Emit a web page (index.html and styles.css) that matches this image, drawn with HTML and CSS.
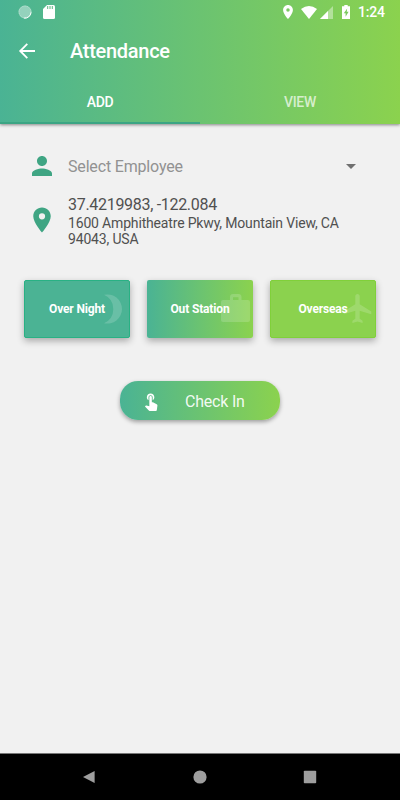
FILE: index.html
```html
<!DOCTYPE html>
<html lang="en">
<head>
<meta charset="utf-8">
<title>Attendance</title>
<link rel="stylesheet" href="styles.css">
</head>
<body>
<header class="header">
  <div class="status">
    <svg class="sync" viewBox="0 0 14 14"><circle cx="7" cy="7" r="6.500" fill="#fff" opacity=".4"/><circle cx="7" cy="7" r="6" fill="none" stroke="#fff" stroke-width="1" stroke-dasharray="1 1" opacity=".4"/><path d="M13 7.500a6.200 6.200 0 0 1-7 5.600" fill="none" stroke="#fff" stroke-width="1"/></svg>
    <svg class="card-icon" viewBox="0 0 12 14"><path fill="#fff" d="M4 0h6.500Q12 0 12 1.500v11Q12 14 10.500 14h-9Q0 14 0 12.500V4z"/><path d="M4.700 1v3M7 1v3M9.300 1v3" stroke="#5db981" stroke-width="1"/></svg>
    <span class="spacer"></span>
    <svg class="status-pin" viewBox="5 2 14 20"><path fill="#fff" d="M12 2C8.130 2 5 5.130 5 9c0 5.250 7 13 7 13s7-7.750 7-13c0-3.870-3.130-7-7-7zm0 9.500a2.500 2.500 0 1 1 0-5 2.500 2.500 0 0 1 0 5z"/></svg>
    <svg class="wifi" viewBox="0 0 16 13"><path fill="#fff" d="M0 3Q8-3 16 3L8 13z"/></svg>
    <svg class="signal" viewBox="0 0 13 13"><path fill="#fff" opacity=".4" d="M13 0v13H0z"/><path fill="#fff" d="M8 5v8H0z"/></svg>
    <svg class="battery" viewBox="0 0 8 14"><path fill="#fff" d="M2.300 0h3.400v1.300H8V14H0V1.300h2.300z"/><path fill="#7bc95f" d="M5.200 3.500 1.800 8.200h1.800v3.500l3-5H4.700z"/></svg>
    <span class="time">1:24</span>
  </div>
  <div class="toolbar">
    <svg class="back" viewBox="0 0 24 24"><path d="M20 12H5.500M12.300 4.800 5.200 12l7.100 7.200" fill="none" stroke="#fff" stroke-width="1.800"/></svg>
    <h1 class="title">Attendance</h1>
  </div>
  <nav class="tabs">
    <span class="tab active">ADD</span>
    <span class="tab">VIEW</span>
  </nav>
</header>
<main class="content">
  <div class="row employee">
    <svg class="row-icon" viewBox="0 0 24 24"><path d="M12 12c2.210 0 4-1.790 4-4s-1.790-4-4-4-4 1.790-4 4 1.790 4 4 4zm0 2c-2.670 0-8 1.340-8 4v2h16v-2c0-2.660-5.330-4-8-4z"/></svg>
    <span class="select">Select Employee</span>
    <svg class="caret" viewBox="0 0 10 5"><path d="M0 0h10L5 5z"/></svg>
  </div>
  <div class="row location">
    <svg class="row-icon" viewBox="0 0 24 24"><path d="M12 2C8.130 2 5 5.130 5 9c0 5.250 7 13 7 13s7-7.750 7-13c0-3.870-3.130-7-7-7zm0 9.500a2.500 2.500 0 1 1 0-5 2.500 2.500 0 0 1 0 5z"/></svg>
    <div class="place">
      <p class="coords">37.4219983, -122.084</p>
      <p class="address">1600 Amphitheatre Pkwy, Mountain View, CA<br>94043, USA</p>
    </div>
  </div>
  <div class="cards">
    <div class="card night">
      <svg class="mark moon" viewBox="0 0 19 30"><path d="M0 .8A14.600 14.600 0 1 1 0 29.200A15.500 15.500 0 0 0 0 .8z"/></svg>
      <span class="label">Over Night</span>
    </div>
    <div class="card station">
      <svg class="mark case" viewBox="0 0 29 28"><path fill-rule="evenodd" d="M9 6V3q0-3 3-3h5.500q3 0 3 3v3H27q2 0 2 2v18q0 2-2 2H2q-2 0-2-2V8q0-2 2-2zm3 0h5.500V3.200H12z"/></svg>
      <span class="label">Out Station</span>
    </div>
    <div class="card overseas">
      <svg class="mark plane" viewBox="2 2 19 20"><path d="M21 16v-2l-8-5V3.500c0-.83-.67-1.500-1.500-1.500S10 2.670 10 3.500V9l-8 5v2l8-2.500V19l-2 1.500V22l3.500-1 3.500 1v-1.500L13 19v-5.500z"/></svg>
      <span class="label">Overseas</span>
    </div>
  </div>
  <button class="check-in" type="button">
    <svg class="touch" viewBox="0 0 24 24"><path d="M9 11.240V7.500C9 6.120 10.120 5 11.500 5S14 6.120 14 7.500v3.740c1.210-.81 2-2.180 2-3.740C16 5.010 13.990 3 11.500 3S7 5.010 7 7.500c0 1.560.79 2.930 2 3.740zm9.840 4.630l-4.540-2.260c-.17-.07-.35-.11-.54-.11H13v-6c0-.83-.67-1.500-1.500-1.500S10 6.670 10 7.500v10.740l-3.430-.72c-.08-.01-.15-.03-.24-.03-.31 0-.59.13-.79.33l-.79.8 4.940 4.940c.27.27.65.44 1.060.44h6.790c.75 0 1.330-.55 1.440-1.280l.75-5.270c.01-.07.02-.14.02-.2 0-.62-.38-1.160-.91-1.380z"/></svg>
    <span class="check-label">Check In</span>
  </button>
</main>
<footer class="navbar">
  <svg class="nav-icon" viewBox="0 0 14 14"><path d="M12.600 .9v12.200L1 7z"/></svg>
  <svg class="nav-icon" viewBox="0 0 14 14"><circle cx="7" cy="7" r="6.600"/></svg>
  <svg class="nav-icon" viewBox="0 0 14 14"><rect x=".8" y=".8" width="12.400" height="12.400" rx=".8"/></svg>
</footer>
</body>
</html>
```
FILE: styles.css
```css
* { box-sizing: border-box; }
body {
  margin: 0;
  height: 800px;
  display: flex;
  flex-direction: column;
  background: #f1f1f1;
  font-family: Roboto, sans-serif;
  overflow: hidden;
}
h1, p { margin: 0; }
svg { display: block; flex: none; overflow: visible; }

.header {
  height: 124px;
  background: linear-gradient(90deg, #4ab394, #6bc371 50%, #8bd24e);
  box-shadow: 0 1px 3px rgba(0, 0, 0, .45);
  color: #fff;
}
.status {
  height: 24px;
  display: flex;
  align-items: center;
  padding: 0 15px 0 18px;
}
.sync { width: 14px; height: 14px; }
.card-icon { width: 12px; height: 14px; margin-left: 11px; }
.spacer { flex: 1; }
.status-pin { width: 10px; height: 14px; margin-right: 8px; }
.wifi { width: 16px; height: 13px; margin-right: 3px; }
.signal { width: 13px; height: 13px; margin-right: 9px; }
.battery { width: 8px; height: 14px; margin-right: 8px; }
.time { font-size: 14px; font-weight: 500; line-height: 24px; width: 27px; white-space: nowrap; letter-spacing: -.2px; }

.toolbar { height: 56px; display: flex; align-items: center; padding-left: 15px; }
.back { width: 24px; height: 24px; margin-top: -3px; }
.title { margin: -2px 0 0 31px; font-size: 20px; font-weight: 500; line-height: 28px; letter-spacing: -.28px; }

.tabs { height: 44px; display: flex; }
.tab {
  flex: 1;
  border-bottom: 2px solid transparent;
  text-align: center;
  font-size: 14px;
  font-weight: 500;
  letter-spacing: -.3px;
  line-height: 44px;
  color: rgba(255, 255, 255, .7);
}
.tab.active { color: #fff; border-color: #3ca584; }

.content { flex: 1; padding: 27px 24px 0; }
.row { display: flex; align-items: center; padding-left: 3px; }
.row-icon { width: 30px; height: 30px; fill: #3fa583; margin-right: 11px; }
.employee { height: 30px; }
.select { flex: 1; padding-top: 1px; font-size: 16px; letter-spacing: -.17px; color: #929292; }
.caret { width: 10px; height: 5px; margin-right: 20px; fill: #707070; }
.location { margin-top: 12px; height: 54px; }
.place { padding-top: 2px; }
.coords { font-size: 16px; letter-spacing: -.3px; line-height: 20px; color: #505050; }
.address { font-size: 14px; letter-spacing: -.17px; line-height: 16px; color: #505050; }

.cards { display: grid; grid-template-columns: repeat(3, 106px); justify-content: space-between; margin-top: 33px; }
.card {
  position: relative;
  height: 58px;
  display: flex;
  align-items: center;
  justify-content: center;
  border: 1px solid;
  border-radius: 2px;
  box-shadow: 0 3px 7px rgba(0, 0, 0, .3);
}
.night { background: #4bb394; border-color: #29b184; }
.station { background: linear-gradient(90deg, #4ab394, #6bc371 50%, #8bd24e) border-box; border-color: transparent; }
.overseas { background: #8bd24e; border-color: #80d03a; }
.label { position: relative; color: #fff; font-size: 12px; font-weight: 700; letter-spacing: -.15px; }
.mark { position: absolute; top: 13px; fill: #fff; opacity: .17; }
.moon { width: 19px; height: 30px; right: 6px; }
.case { width: 29px; height: 28px; right: 2px; }
.plane { width: 29px; height: 29px; right: 3px; }

.check-in {
  width: 160px;
  height: 39px;
  margin: 43px auto 0;
  display: flex;
  align-items: center;
  padding: 0 0 0 21px;
  border: 0;
  border-radius: 18px;
  background: linear-gradient(90deg, #4ab394, #6bc371 50%, #8bd24e);
  box-shadow: 0 2px 4px rgba(0, 0, 0, .35);
  color: rgba(255, 255, 255, .93);
  font: 400 16px/20px Roboto, sans-serif;
  letter-spacing: -.2px;
}
.touch { width: 20px; height: 20px; fill: #fff; }
.check-label { margin-left: 24px; padding-top: 2px; }

.navbar {
  height: 47px;
  display: flex;
  align-items: center;
  justify-content: space-between;
  padding: 0 83px 0 82px;
  background: #000;
  border-top: 1px solid #777;
}
.nav-icon { width: 14px; height: 14px; fill: #9e9e9e; }
```
